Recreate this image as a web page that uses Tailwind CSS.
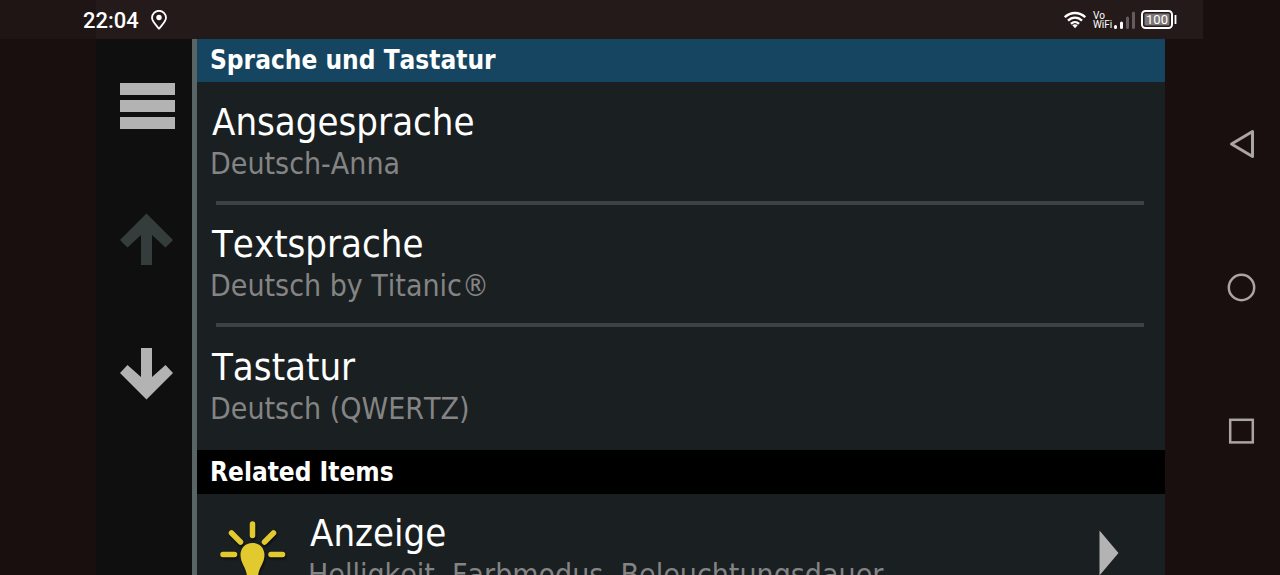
<!DOCTYPE html>
<html lang="de">
<head>
<meta charset="utf-8">
<meta name="viewport" content="width=device-width, initial-scale=1">
<title>Sprache und Tastatur</title>
<script src="https://cdn.jsdelivr.net/npm/@tailwindcss/browser@4"></script>
</head>
<body class="flex h-screen overflow-hidden bg-[#180f0e] font-['DejaVu_Sans_Condensed','DejaVu_Sans',sans-serif] text-white [font-kerning:none]">
  <div class="flex min-w-0 flex-1 flex-col">
    <header class="flex h-[39px] shrink-0 items-center bg-linear-to-r from-[#1f1515] from-[96px] to-[#251a1a] to-[96px] pr-[26px] pl-[83px] font-[Roboto,sans-serif]">
      <time class="pt-[2px] text-[22px] leading-6 font-medium">22:04</time>
      <svg class="ml-3 h-5 w-4" viewBox="0 0 16 20" fill="none" aria-label="Standort"><path d="M8 18.7C5.500 15.500 1 11.500 1 7.800A7 7 0 0 1 15 7.800C15 11.500 10.500 15.500 8 18.700Z" stroke="#fff" stroke-width="1.800" stroke-linejoin="round"/><circle cx="8" cy="7.500" r="2.700" fill="#fff"/></svg>
      <div class="ml-auto flex items-center">
        <svg class="h-[18px] w-[22px]" viewBox="0 0 22 18" fill="none" stroke="#fff" stroke-width="2.400" aria-label="WLAN"><path d="M.8 6.200C6.500.500 15.500.500 21.200 6.200M4 9.600C8 5.600 14 5.600 18 9.600M7 12.800C9.300 10.500 12.700 10.500 15 12.800"/><path d="M8.300 14.200Q11 12.200 13.700 14.200L11 17.200Z" fill="#fff" stroke="none"/></svg>
        <div class="ml-[7px] w-[19px] text-[10px] leading-[9px]">Vo<br>WiFi</div>
        <svg class="ml-[2px] h-[18px] w-[21px]" viewBox="0 0 21 18" stroke-width="3" stroke-linecap="round" aria-label="Signal"><path d="M1.500 15.500v1M7.500 12v4.500" stroke="#fff"/><path d="M13.500 7v9.500M19.500 2v14.500" stroke="#645b5b"/></svg>
        <svg class="ml-[6px] h-[19px] w-9" viewBox="0 0 36 19" aria-label="Akku 100 Prozent"><rect x="1" y="1" width="30" height="17" rx="3.500" fill="none" stroke="#fff" stroke-width="2"/><rect x="3.500" y="3.500" width="25" height="12" rx="1" fill="#7d7676"/><path d="M34.500 5v9" stroke="#fff" stroke-width="1.800"/><text x="16" y="14" text-anchor="middle" font-size="13" fill="#fff">100</text></svg>
      </div>
    </header>

    <div class="flex min-h-0 flex-1 pr-[38px] pl-24">
      <aside class="flex w-24 shrink-0 flex-col items-center bg-[#0f0f0f] pt-11 pl-[6px]">
        <button type="button" aria-label="Menü" class="flex flex-col gap-[5px]">
          <span class="h-3 w-[55px] bg-[#b3b3b3]"></span><span class="h-3 w-[55px] bg-[#b3b3b3]"></span><span class="h-3 w-[55px] bg-[#b3b3b3]"></span>
        </button>
        <button type="button" aria-label="Nach oben" disabled class="mt-[84px] mr-[2px]">
          <svg class="block h-[53px] w-[53px]" viewBox="0 0 53 53" fill="#353d3c"><path d="M26.500.500L53 27L45.500 34.500L32 22V52H21V22L7.500 34.500L0 27Z"/></svg>
        </button>
        <button type="button" aria-label="Nach unten" class="mt-[81px] mr-[2px]">
          <svg class="block h-[53px] w-[53px]" viewBox="0 0 53 53" fill="#b3b3b3"><path d="M26.500 52.500L53 26L45.500 18L32 30V1H21V30L7.500 18L0 26Z"/></svg>
        </button>
      </aside>

      <main class="min-w-0 flex-1 overflow-hidden border-l-[5px] border-[#596564] bg-[#1a1f21]">
        <h1 class="flex h-[43px] items-center bg-[#154560] px-[13px] text-[26px] font-bold">Sprache und Tastatur</h1>
        <ul>
          <li>
            <button type="button" class="block w-full px-[13px] pt-[17px] pb-[18px] text-left">
              <span class="block pl-[2px] text-[38px] leading-[46px]">Ansagesprache</span>
              <span class="block text-[30px] leading-[38px] text-[#848484]">Deutsch-Anna</span>
            </button>
            <hr class="mr-[21px] ml-[19px] border-t-4 border-[#3d4245]">
          </li>
          <li>
            <button type="button" class="block w-full px-[13px] pt-4 pb-[18px] text-left">
              <span class="block pl-[2px] text-[38px] leading-[46px]">Textsprache</span>
              <span class="block text-[30px] leading-[38px] text-[#848484]">Deutsch by Titanic®</span>
            </button>
            <hr class="mr-[21px] ml-[19px] border-t-4 border-[#3d4245]">
          </li>
          <li>
            <button type="button" class="block w-full px-[13px] pt-[17px] pb-[22px] text-left">
              <span class="block pl-[2px] text-[38px] leading-[46px]">Tastatur</span>
              <span class="block text-[30px] leading-[38px] text-[#848484]">Deutsch (QWERTZ)</span>
            </button>
          </li>
        </ul>
        <h2 class="flex h-11 items-center bg-black px-[13px] text-[26px] font-bold">Related Items</h2>
        <button type="button" class="flex w-full items-start pr-[46px] pl-[22px] text-left">
          <svg class="mt-[26px] h-[90px] w-[68px] shrink-0 drop-shadow-[1px_2px_1px_#0008]" viewBox="0 0 68 90" fill="#e2c92e"><path d="M33.500 4V15.500M12.500 13L21.500 22M54.500 13L45.500 22M4 34.500H15.500M52 34.500H63.500" stroke="#e2c92e" stroke-width="5.500" stroke-linecap="round"/><path d="M33.500 23C26 23 21.500 28.500 21.500 35C21.500 43 27 47 28 56V62H39V56C40 47 45.500 43 45.500 35C45.500 28.500 41 23 33.500 23Z"/></svg>
          <span class="ml-[21px] min-w-0 flex-1 pt-4">
            <span class="block pl-[2px] text-[38px] leading-[46px]">Anzeige</span>
            <span class="block truncate text-[30px] leading-[38px] text-[#848484]">Helligkeit, Farbmodus, Beleuchtungsdauer</span>
          </span>
          <svg class="mt-9 h-[46px] w-5 shrink-0" viewBox="0 0 20 46" fill="#b3b3b3"><path d="M.500.500L19.500 23L.500 45.500Z"/></svg>
        </button>
      </main>
    </div>
  </div>

  <nav aria-label="Systemnavigation" class="flex w-[77px] shrink-0 flex-col items-center justify-center gap-[114px]">
    <button type="button" aria-label="Zurück"><svg class="block h-[30px] w-[30px]" viewBox="0 0 30 30" fill="none" stroke="#aaa4a3" stroke-width="3" stroke-linejoin="round"><path d="M4.500 15L25.500 2.500V27.500Z"/></svg></button>
    <button type="button" aria-label="Startseite"><svg class="block h-[30px] w-[30px]" viewBox="0 0 30 30" fill="none" stroke="#aaa4a3" stroke-width="2.500"><circle cx="14.500" cy="14.500" r="12.700"/></svg></button>
    <button type="button" aria-label="Letzte Apps"><svg class="block h-[30px] w-[30px]" viewBox="0 0 30 30" fill="none" stroke="#aaa4a3" stroke-width="2.500"><rect x="3.200" y="2.800" width="22.600" height="22.600"/></svg></button>
  </nav>
</body>
</html>
